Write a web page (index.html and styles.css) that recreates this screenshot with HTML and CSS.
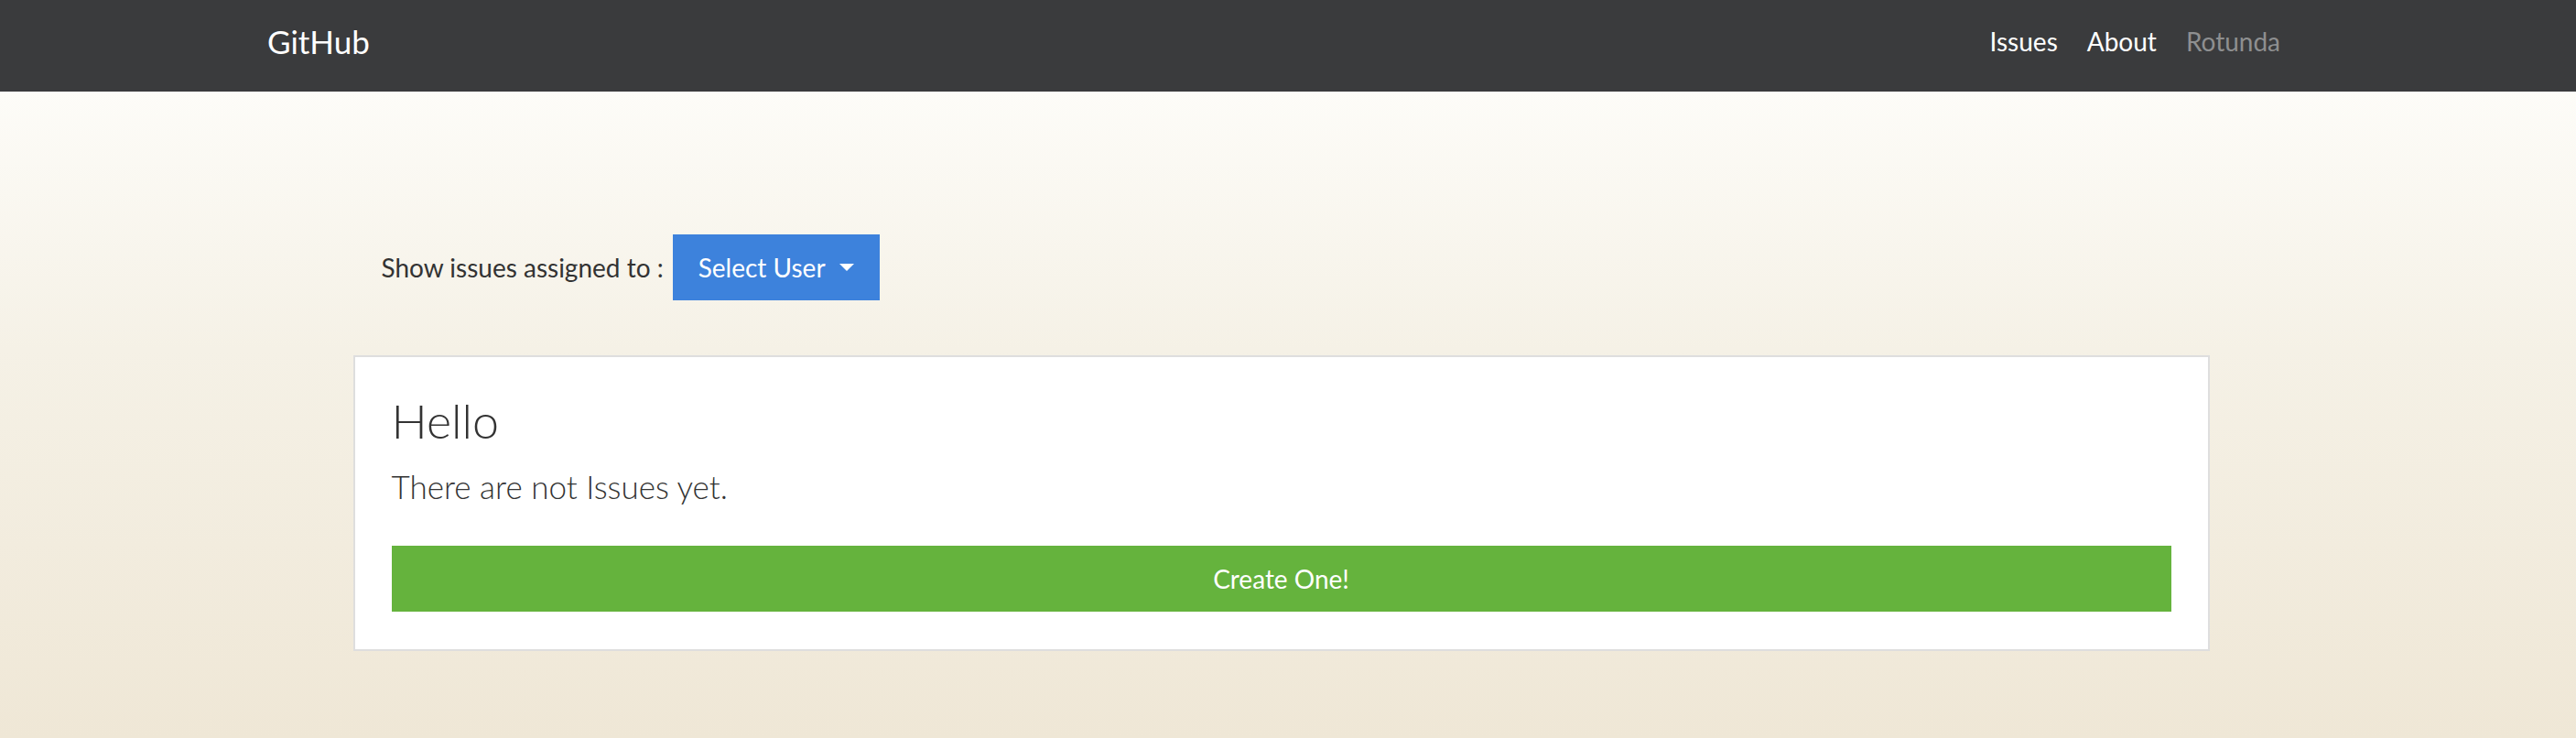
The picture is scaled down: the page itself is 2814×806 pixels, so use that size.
FILE: index.html
```html
<!DOCTYPE html>
<html lang="en">
<head>
<meta charset="utf-8">
<title>GitHub Issues</title>
<link rel="stylesheet" href="styles.css">
</head>
<body>
<div class="page">
  <nav class="navbar">
    <div class="nav-inner">
      <a class="brand" href="#">GitHub</a>
      <ul class="nav-links">
        <li><a class="nav-link" href="#">Issues</a></li>
        <li><a class="nav-link" href="#">About</a></li>
        <li><a class="nav-link muted" href="#">Rotunda</a></li>
      </ul>
    </div>
  </nav>
  <main class="main">
    <div class="container">
      <div class="filter">
        <span class="filter-label">Show issues assigned to :</span>
        <button class="btn-select" type="button">Select User<span class="caret"></span></button>
      </div>
      <section class="card">
        <h3 class="card-title">Hello</h3>
        <p class="lead">There are not Issues yet.</p>
        <button class="btn-create" type="button">Create One!</button>
      </section>
    </div>
  </main>
</div>
</body>
</html>
```

FILE: styles.css
```css
* { box-sizing: border-box; }
html, body { margin: 0; padding: 0; }
body {
  font-family: "Lato", "Liberation Sans", sans-serif;
  color: #333;
  background: #efe7d6;
  height: 806px;
  overflow: hidden;
}
.page {
  width: 100%;
  height: 806px;
  display: flex;
  flex-direction: column;
}
.navbar {
  height: 100px;
  background: #3a3b3d;
  flex: none;
  padding-right: 15px;
}
.nav-inner {
  width: 2215px;
  margin: 0 auto;
  height: 100%;
  display: flex;
  align-items: center;
  justify-content: space-between;
}
.brand {
  color: #fff;
  text-decoration: none;
  font-size: 35px;
  line-height: 1;
  padding-bottom: 10px;
}
.nav-links {
  list-style: none;
  margin: 0;
  padding: 0 0 10px 0;
  display: flex;
}
.nav-link {
  display: block;
  color: #fff;
  text-decoration: none;
  font-size: 28px;
  padding: 0 16px;
}
.nav-link.muted { color: #8e8f90; }
.main {
  flex: 1;
  padding-right: 15px;
  background: linear-gradient(to bottom, #fdfcf8 0%, #f5f1e6 40%, #efe7d6 100%);
}
.container {
  width: 2028px;
  margin: 0 auto;
  padding-top: 156px;
}
.filter {
  display: flex;
  align-items: center;
  padding-left: 31px;
  gap: 10px;
}
.filter-label {
  font-size: 28px;
  color: #333;
}
.btn-select {
  display: flex;
  align-items: center;
  height: 72px;
  padding: 0 28px;
  border: none;
  border-radius: 0;
  background: #3d82dc;
  color: #fff;
  font-family: inherit;
  font-size: 28px;
}
.caret {
  width: 0;
  height: 0;
  margin-left: 15px;
  border-top: 8px solid #fff;
  border-left: 8px solid transparent;
  border-right: 8px solid transparent;
}
.card {
  margin-top: 60px;
  background: #fff;
  border: 2px solid #dedede;
  padding: 38px 40px 41px;
}
.card-title {
  margin: 0;
  font-size: 52px;
  font-weight: 300;
  line-height: 62px;
  color: #333;
}
.lead {
  margin: 19px 0 0;
  font-size: 35px;
  font-weight: 300;
  line-height: 44px;
  color: #333;
}
.btn-create {
  display: block;
  width: 100%;
  height: 72px;
  margin-top: 43px;
  border: none;
  border-radius: 0;
  background: #65b33d;
  color: #fff;
  font-family: inherit;
  font-size: 28px;
}
```
